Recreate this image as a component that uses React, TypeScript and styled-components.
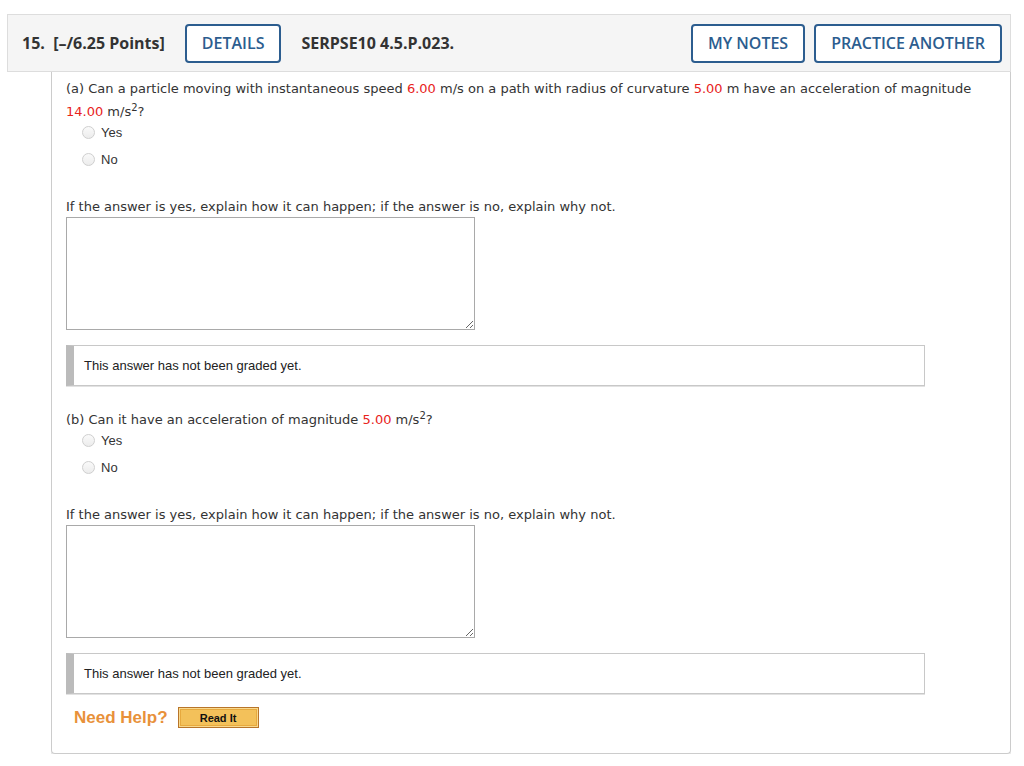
import React from "react";
import styled, { createGlobalStyle } from "styled-components";

const GlobalStyle = createGlobalStyle`
  html, body {
    margin: 0;
    padding: 0;
    background: #fff;
  }
  body {
    font-family: "Liberation Sans", Arial, sans-serif;
    color: #333;
  }
`;

const getParts = () => [
  {
    id: "a",
    question: (
      <>
        (a) Can a particle moving with instantaneous speed <Num>6.00</Num> m/s on a path with radius of curvature{" "}
        <Num>5.00</Num> m have an acceleration of magnitude <Num>14.00</Num> m/s<sup>2</sup>?
      </>
    ),
  },
  {
    id: "b",
    question: (
      <>
        (b) Can it have an acceleration of magnitude <Num>5.00</Num> m/s<sup>2</sup>?
      </>
    ),
  },
];

export default function App() {
  const parts = getParts();
  return (
    <Page>
      <GlobalStyle />
      <Header>
        <HeaderLeft>
          <Title>15.&nbsp;&nbsp;[–/6.25 Points]</Title>
          <OutlineButton>DETAILS</OutlineButton>
          <Title>SERPSE10 4.5.P.023.</Title>
        </HeaderLeft>
        <HeaderRight>
          <OutlineButton>MY NOTES</OutlineButton>
          <OutlineButton>PRACTICE ANOTHER</OutlineButton>
        </HeaderRight>
      </Header>
      <Body>
        {parts.map((p) => (
          <Part key={p.id}>
            <Question>{p.question}</Question>
            <Choices>
              {["Yes", "No"].map((c) => (
                <Choice key={c}>
                  <Radio type="radio" name={p.id} />
                  {c}
                </Choice>
              ))}
            </Choices>
            <Prompt>If the answer is yes, explain how it can happen; if the answer is no, explain why not.</Prompt>
            <Answer />
            <Graded>This answer has not been graded yet.</Graded>
          </Part>
        ))}
        <HelpRow>
          <HelpLabel>Need Help?</HelpLabel>
          <ReadIt>Read It</ReadIt>
        </HelpRow>
      </Body>
    </Page>
  );
}

const Page = styled.div`
  padding: 14px 13px 0 7px;
`;

const Header = styled.div`
  display: flex;
  align-items: center;
  justify-content: space-between;
  height: 56px;
  padding: 0 8px 0 14px;
  background: #f5f5f5;
  border: 1px solid #ddd;
  font-family: "Open Sans", sans-serif;
`;

const HeaderLeft = styled.div`
  display: flex;
  align-items: center;
  gap: 20px;
`;

const HeaderRight = styled.div`
  display: flex;
  align-items: center;
  gap: 9px;
`;

const Title = styled.span`
  font-size: 16px;
  font-weight: 700;
  color: #333;
  white-space: nowrap;
`;

const OutlineButton = styled.button`
  height: 39px;
  padding: 0 15px;
  background: #fff;
  border: 2px solid #2c5d8f;
  border-radius: 4px;
  color: #2c5d8f;
  font-family: "Open Sans", sans-serif;
  font-size: 16px;
  font-weight: 600;
  cursor: pointer;
`;

const Body = styled.div`
  margin-left: 44px;
  padding: 5px 14px 25px 14px;
  border: 1px solid #ccc;
  border-top: none;
  border-radius: 0 0 4px 4px;
  box-shadow: 0 2px 0 #e6e6e6;
`;

const Part = styled.div`
  & + & {
    margin-top: 22px;
  }
`;

const Question = styled.div`
  font-family: "DejaVu Sans", Verdana, sans-serif;
  font-size: 13px;
  line-height: 23px;
  color: #333;

  sup {
    font-size: 10px;
    line-height: 0;
  }
`;

const Num = styled.span`
  color: #e8231c;
`;

const Choices = styled.div`
  display: flex;
  flex-direction: column;
  gap: 9px;
  padding-left: 16px;
`;

const Choice = styled.label`
  display: flex;
  align-items: center;
  gap: 6px;
  height: 18px;
  font-size: 13px;
  color: #333;
`;

const Radio = styled.input`
  appearance: none;
  margin: 0;
  width: 13px;
  height: 13px;
  border: 1px solid #cfcfcf;
  border-radius: 50%;
  background: linear-gradient(#fafafa, #ececec);
`;

const Prompt = styled.div`
  margin-top: 30px;
  font-family: "DejaVu Sans", Verdana, sans-serif;
  font-size: 13px;
  line-height: 18px;
  color: #333;
`;

const Answer = styled.textarea`
  display: block;
  box-sizing: border-box;
  width: 409px;
  height: 113px;
  margin: 1px 0 0;
  border: 1px solid #a9a9a9;
  background: #fff;
`;

const Graded = styled.div`
  margin-top: 15px;
  width: 859px;
  box-sizing: border-box;
  height: 41px;
  display: flex;
  align-items: center;
  padding-left: 10px;
  border: 1px solid #c8c8c8;
  border-left: 8px solid #bbb;
  box-shadow: 0 1px 0 #e2e2e2;
  font-family: "Liberation Sans", Arial, sans-serif;
  font-size: 13px;
  color: #222;
`;

const HelpRow = styled.div`
  display: flex;
  align-items: center;
  gap: 10px;
  margin-top: 13px;
  padding-left: 8px;
`;

const HelpLabel = styled.span`
  font-family: "Liberation Sans", Arial, sans-serif;
  font-size: 17px;
  font-weight: 700;
  color: #e8913a;
`;

const ReadIt = styled.button`
  width: 81px;
  height: 21px;
  padding: 0;
  background: #f3c15a;
  border: 1px solid #b8752a;
  box-shadow: inset 0 0 0 1px #f8d98e, inset 0 0 0 2px #e7a93e;
  font-family: "Liberation Sans", Arial, sans-serif;
  font-size: 11px;
  font-weight: 700;
  color: #111;
  cursor: pointer;
`;
